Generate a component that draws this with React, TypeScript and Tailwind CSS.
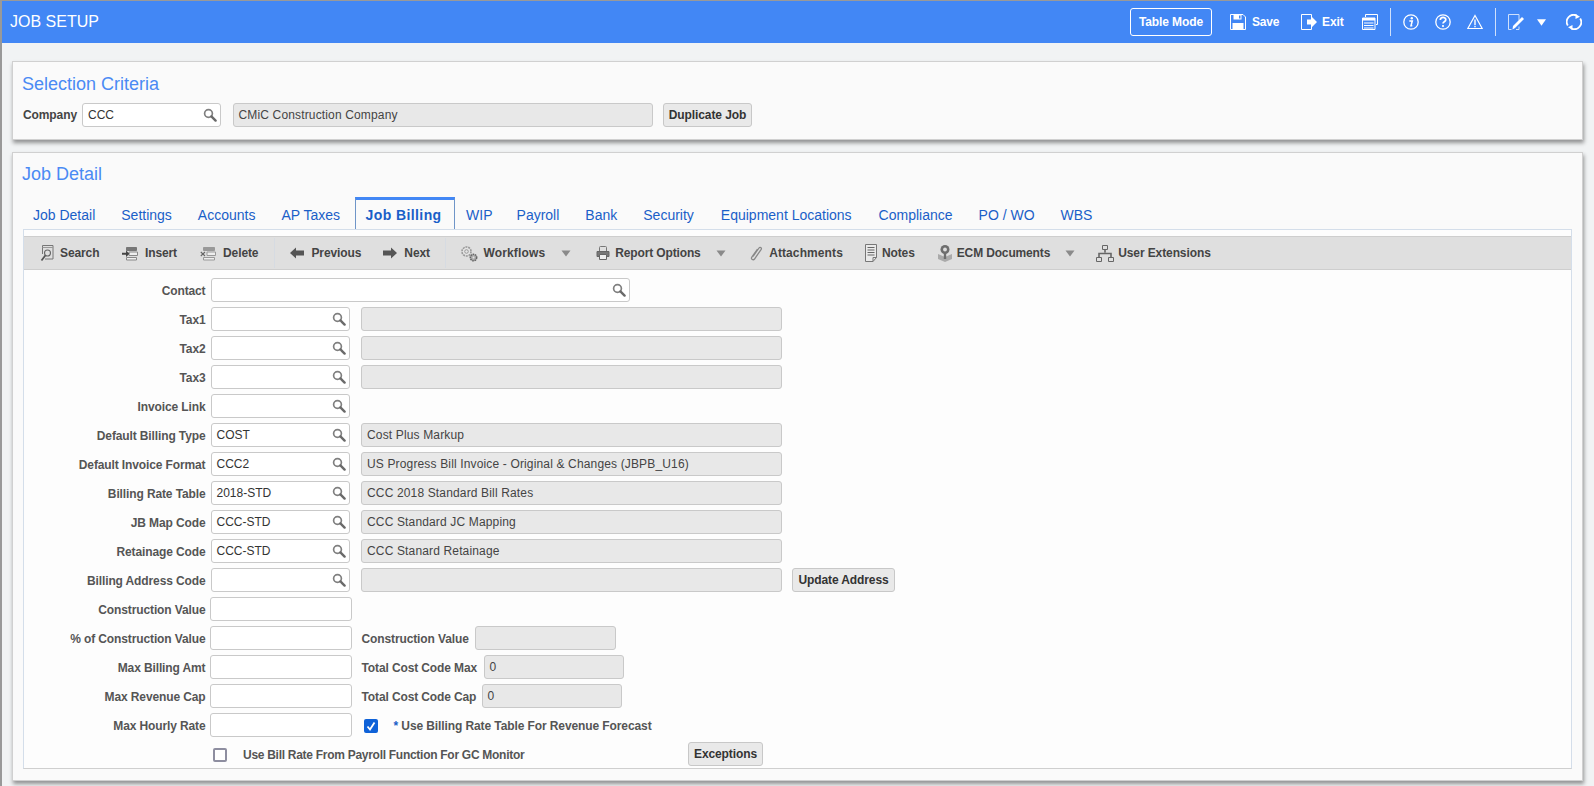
import React from 'react'

const F = "font-['Liberation_Sans',Arial,sans-serif]"

type IconProps = { className?: string }

const Magnifier = () => (
  <svg viewBox="0 0 14 14" className="w-[14px] h-[14px] shrink-0">
    <circle cx="5.5" cy="5.5" r="3.9" fill="none" stroke="#808080" strokeWidth="1.7" />
    <path d="M8.4 8.4 12.6 12.6" stroke="#6a6a6a" strokeWidth="2.4" strokeLinecap="round" />
  </svg>
)

const Caret = ({ className = '' }: IconProps) => (
  <svg viewBox="0 0 10 7" className={`w-[10px] h-[7px] shrink-0 ${className}`}>
    <path d="M0.5 0.5h9L5 6.5z" fill="#8a8a8a" />
  </svg>
)

const SearchIcon = () => (
  <svg viewBox="0 0 14 17" className="w-[14px] h-[17px]">
    <path d="M2.500.5h10.500v13.500H5" fill="none" stroke="#777" />
    <path d="M2.500.5V9" fill="none" stroke="#777" />
    <path d="M2.500 2.500H13" stroke="#999" />
    <circle cx="7.500" cy="8" r="3" fill="none" stroke="#666" strokeWidth="1.100" />
    <path d="M5.300 10.500 1.500 15.500" stroke="#555" strokeWidth="1.800" />
  </svg>
)

const InsertIcon = () => (
  <svg viewBox="0 0 16 15" className="w-[16px] h-[15px]">
    <path d="M4.500 1.500h10v3h-10z" fill="#777" stroke="#777" />
    <path d="M7 6h8.500v3.500H7z" fill="#eee" stroke="#888" />
    <path d="M4.500 11.500h10v2.500h-10z" fill="#eee" stroke="#888" />
    <path d="M0 6.800h4V4.500L7.500 7.800 4 11V8.800H0z" fill="#444" />
  </svg>
)

const DeleteIcon = () => (
  <svg viewBox="0 0 16 15" className="w-[16px] h-[15px]">
    <path d="M3.500 1.500h11v3h-11z" fill="#999" stroke="#999" />
    <path d="M7 6h8.500v3.500H7z" fill="#eee" stroke="#999" />
    <path d="M3.500 11.500h11v2.500h-11z" fill="#eee" stroke="#999" />
    <path d="M.8 6 5 10M5 6 .8 10" stroke="#666" strokeWidth="1.100" />
  </svg>
)

const ArrowLeft = () => (
  <svg viewBox="0 0 14 12" className="w-[14px] h-[12px]">
    <path d="M0 6 6 .5V3.500h8v5H6v3z" fill="#555" />
  </svg>
)

const ArrowRight = () => (
  <svg viewBox="0 0 14 12" className="w-[14px] h-[12px]">
    <path d="M14 6 8 .5V3.500H0v5h8v3z" fill="#555" />
  </svg>
)

const Gears = () => (
  <svg viewBox="0 0 18 17" className="w-[18px] h-[17px]">
    <circle cx="6.500" cy="6.500" r="4.500" fill="#e4e4e4" stroke="#999" strokeWidth="1.600" strokeDasharray="2 .8" />
    <circle cx="6.500" cy="6.500" r="1.800" fill="none" stroke="#999" />
    <circle cx="13.500" cy="12.500" r="3.200" fill="#aaa" stroke="#666" strokeWidth="1.500" strokeDasharray="1.600 .7" />
    <circle cx="13.500" cy="12.500" r="1" fill="#e4e4e4" />
  </svg>
)

const Printer = () => (
  <svg viewBox="0 0 14 14" className="w-[14px] h-[14px]">
    <path d="M3.500 5.500V1.500q0-1 1-1h5q1 0 1 1v4" fill="none" stroke="#777" />
    <path d="M1 5.500h12v5H1z" fill="#777" stroke="#666" />
    <path d="M3.500 8.500h7v5h-7z" fill="#eee" stroke="#666" />
  </svg>
)

const Clip = () => (
  <svg viewBox="0 0 13 17" className="w-[13px] h-[17px]">
    <path d="M3 11.500 9 3c1-1.400 3-.2 2.200 1.300L4.500 14c-1.200 1.600-3.800.4-2.800-1.700L7.500 4" fill="none" stroke="#888" strokeWidth="1.300" />
  </svg>
)

const Notes = () => (
  <svg viewBox="0 0 12 18" className="w-[12px] h-[18px]">
    <path d="M.5.500h11v13l-3.500 4H.5z" fill="#eaeaea" stroke="#777" />
    <path d="M8 17.500v-4h3.500" fill="none" stroke="#777" />
    <path d="M2.500 3.500h7M2.500 6h7M2.500 8.500h7M2.500 11h7" stroke="#666" />
  </svg>
)

const Ecm = () => (
  <svg viewBox="0 0 16 18" className="w-[16px] h-[18px]">
    <path d="M1 10 8 13l7-3v5l-7 3-7-3z" fill="#aaa" />
    <circle cx="8" cy="5.500" r="4.500" fill="#6e6e6e" />
    <circle cx="8" cy="5.500" r="1.900" fill="#ddd" />
    <path d="M6.800 9h2.400v6H6.800z" fill="#6e6e6e" />
  </svg>
)

const Org = () => (
  <svg viewBox="0 0 18 17" className="w-[18px] h-[17px]" fill="none" stroke="#666">
    <path d="M6.500.5h5v4h-5zM.5 12.500h5v4h-5zM12.500 12.500h5v4h-5z" />
    <path d="M9 4.500v3M3 12.500V8.500h12v4" strokeWidth="1.600" />
  </svg>
)

const Lookup = ({ value = '', wide = false }: { value?: string; wide?: boolean }) => (
  <div className={`flex items-center justify-between h-[24px] bg-white border border-[#c9c9c9] rounded-[3px] pl-[5px] pr-[3px] text-[12px] text-[#333] ${wide ? 'w-[419px]' : 'w-[139.500px]'}`}>
    <span>{value}</span>
    <Magnifier />
  </div>
)

const ReadOnly = ({ value = '', className = '' }: { value?: string; className?: string }) => (
  <div className={`flex items-center h-[24px] bg-[#e8e8e8] border border-[#c9c9c9] rounded-[3px] px-[5px] text-[12px] tracking-[0.15px] text-[#444] ${className}`}>{value}</div>
)

const TextBox = () => <div className="w-[142px] -ml-px h-[24px] bg-white border border-[#c9c9c9] rounded-[3px]" />

const Btn = ({ children, className = '' }: { children: React.ReactNode; className?: string }) => (
  <div className={`flex items-center justify-center h-[24px] bg-[#e9e9e9] border border-[#c8c8c8] rounded-[3px] text-[12px] font-bold tracking-[-0.1px] text-[#333] ${className}`}>{children}</div>
)

const Row = ({ label, children }: { label: string; children: React.ReactNode }) => (
  <div className="flex items-center h-[24px] mb-[5px]">
    <div className="w-[181.500px] mr-[5px] pt-[2px] text-right text-[12px] font-bold tracking-[-0.12px] text-[#555] whitespace-nowrap">{label}</div>
    {children}
  </div>
)

const tabs = ['Job Detail', 'Settings', 'Accounts', 'AP Taxes', 'Job Billing', 'WIP', 'Payroll', 'Bank', 'Security', 'Equipment Locations', 'Compliance', 'PO / WO', 'WBS']

const tabPad: Record<string, string> = {
  WIP: 'pl-[13px] pr-[11px]',
  Security: 'pl-[13px] pr-[14px]',
  'Equipment Locations': 'pl-[13px] pr-[14px]',
}

const Tool = ({ icon, label, className = '', track = 'tracking-[-0.1px]' }: { icon: React.ReactNode; label: string; className?: string; track?: string }) => (
  <div className={`flex items-center text-[12px] font-bold text-[#444] whitespace-nowrap ${track} ${className}`}>
    {icon}
    <span>{label}</span>
  </div>
)

const billing: [string, string, string][] = [
  ['Default Billing Type', 'COST', 'Cost Plus Markup'],
  ['Default Invoice Format', 'CCC2', 'US Progress Bill Invoice - Original & Changes (JBPB_U16)'],
  ['Billing Rate Table', '2018-STD', 'CCC 2018 Standard Bill Rates'],
  ['JB Map Code', 'CCC-STD', 'CCC Standard JC Mapping'],
  ['Retainage Code', 'CCC-STD', 'CCC Stanard Retainage'],
]

export default function App() {
  return (
    <div className={`${F} w-full h-screen overflow-hidden bg-[#f1f3f4] border-t border-l-2 border-[#999]`}>
      {/* top bar */}
      <div className="flex items-center h-[42px] bg-[#4287f5] text-white">
        <div className="ml-[8px] text-[16px]">JOB SETUP</div>
        <div className="flex items-center ml-auto">
          <div className="flex items-center justify-center w-[82px] h-[28px] border border-white rounded-[3px] text-[12px] font-bold tracking-[-0.1px]">Table Mode</div>
          <svg viewBox="0 0 16 16" className="w-[16px] h-[16px] ml-[18px]">
            <path d="M.5.500h12.500l2.500 2.500v12.500H.5z" fill="none" stroke="#fff" />
            <path d="M3.500 1h8v4.500h-8zM2.500 9h11v6h-11z" fill="#fff" />
            <path d="M9 1.500h1.500v3H9z" fill="#4287f5" />
          </svg>
          <span className="ml-[6px] w-[27px] text-[12px] font-bold tracking-[-0.2px]">Save</span>
          <svg viewBox="0 0 16 16" className="w-[16px] h-[16px] ml-[22px]">
            <path d="M10.500 3.500V.5H.5v15h10v-3" fill="none" stroke="#fff" />
            <path d="M6 5.500h4V2l6 6-6 6v-3.500H6z" fill="#fff" />
          </svg>
          <span className="ml-[5px] w-[21px] text-[12px] font-bold tracking-[-0.1px]">Exit</span>
          <svg viewBox="0 0 16 16" className="w-[16px] h-[16px] ml-[19px]">
            <path d="M3.500 3V.5h12v10H14" fill="none" stroke="#fff" />
            <path d="M.5 4h12.500v11.500H.5z" fill="#4287f5" stroke="#fff" />
            <path d="M.5 4h12.500v2.500H.5zM2 8.500h9.500v1H2zM2 11h9.500v1H2zM2 13.500h9.500v1H2z" fill="#fff" />
          </svg>
          <div className="w-px h-[28px] bg-[#cfe0fb] ml-[12px]" />
          <svg viewBox="0 0 16 16" className="w-[16px] h-[16px] ml-[12px]">
            <circle cx="8" cy="8" r="7.200" fill="none" stroke="#fff" strokeWidth="1.300" />
            <circle cx="8.800" cy="4.300" r="1.200" fill="#fff" />
            <path d="M6.300 7h3l-1.300 4.800h1.300" fill="none" stroke="#fff" strokeWidth="1.500" />
          </svg>
          <svg viewBox="0 0 16 16" className="w-[16px] h-[16px] ml-[16px]">
            <circle cx="8" cy="8" r="7.200" fill="none" stroke="#fff" strokeWidth="1.300" />
            <path d="M5.300 6c0-3.400 5.500-3.400 5.500-.2 0 2-2.800 2-2.800 3.700" fill="none" stroke="#fff" strokeWidth="1.700" />
            <circle cx="8" cy="12" r="1.100" fill="#fff" />
          </svg>
          <svg viewBox="0 0 16 16" className="w-[16px] h-[16px] ml-[16px]">
            <path d="M8 1.500 15.200 14.500H.8z" fill="none" stroke="#fff" strokeWidth="1.200" />
            <path d="M7.300 5.500h1.400v5.500H7.300zM7.300 11.800h1.400v1.400H7.300z" fill="#fff" />
          </svg>
          <div className="w-px h-[28px] bg-[#cfe0fb] ml-[12px]" />
          <svg viewBox="0 0 16 16" className="w-[16px] h-[16px] ml-[12px]">
            <path d="M5 .5H.5v15h3M5 .5h6v6M8 15.500h3v-3" fill="none" stroke="#cfe0fb" />
            <path d="M4.500 15.500 5 12 14 3l2 2-9 9z" fill="#fff" />
          </svg>
          <svg viewBox="0 0 10 7" className="w-[9px] h-[7px] ml-[13px]">
            <path d="M0 0h10L5 7z" fill="#fff" />
          </svg>
          <svg viewBox="0 0 16 16" className="w-[16px] h-[16px] ml-[20px] mr-[12px]">
            <path d="M1.800 11.500A7 7 0 0 1 10.500 1.400M14.200 4.500A7 7 0 0 1 5.500 14.600" fill="none" stroke="#fff" strokeWidth="1.800" />
            <path d="M9.500 0 14 2.800 9.500 5zM6.500 16 2 13.200 6.500 11z" fill="#fff" />
          </svg>
        </div>
      </div>

      {/* selection criteria */}
      <div className="ml-[10px] mr-[11px] mt-[18px] h-[79px] bg-[#fafafa] border border-[#d0d0d0] shadow-[1px_3px_4px_rgba(0,0,0,0.4)] pl-[10px]">
        <div className="text-[18px] text-[#4a8af4] leading-[20px] mt-[12px] -ml-px">Selection Criteria</div>
        <div className="flex items-center mt-[9px]">
          <span className="text-[12px] font-bold tracking-[-0.1px] text-[#444] w-[59px]">Company</span>
          <div className="w-[138.500px] flex"><Lookup value="CCC" /></div>
          <ReadOnly value="CMiC Construction Company" className="w-[420.500px] ml-[12px]" />
          <Btn className="w-[89px] ml-[10px]">Duplicate Job</Btn>
        </div>
      </div>

      {/* job detail */}
      <div className="ml-[10px] mr-[11px] mt-[12px] h-[629px] bg-[#fafafa] border border-[#d0d0d0] shadow-[1px_3px_4px_rgba(0,0,0,0.4)] px-[10px]">
        <div className="text-[18px] text-[#4a8af4] leading-[20px] mt-[11px] -ml-px">Job Detail</div>
        <div className="flex h-[32px] mt-[13px] -ml-[3px] text-[14px] text-[#1a5fc8]">
          {tabs.map(t =>
            t === 'Job Billing' ? (
              <div key={t} className="flex items-center justify-center w-[100px] ml-[2px] -mr-[2px] border-t-[3px] border-t-[#4287f5] border-x border-x-[#6f95c8] font-bold tracking-[0.4px] bg-[#fafafa] pt-[2px] pr-[3px]">{t}</div>
            ) : (
              <div key={t} className={`flex items-center whitespace-nowrap pt-[5px] ${tabPad[t] ?? 'px-[13px]'}`}>{t}</div>
            ),
          )}
        </div>
        <div className="h-[540px] bg-[#fdfdfd] border border-[#d4deea] border-b-[#cfcfcf] pt-[6px]">
          {/* toolbar */}
          <div className="flex items-center h-[34px] bg-[#dfdfdf] border-y border-[#cecece]">
            <Tool className="ml-[16px]" icon={<span className="mr-[6px]"><SearchIcon /></span>} label="Search" />
            <Tool className="ml-[23px]" icon={<span className="mr-[6.500px]"><InsertIcon /></span>} label="Insert" />
            <Tool className="ml-[23px]" icon={<span className="mr-[7px]"><DeleteIcon /></span>} label="Delete" />
            <div className="w-px h-[30px] bg-[#d6dbe2] ml-[16px]" />
            <Tool className="ml-[15px]" icon={<span className="mr-[7px]"><ArrowLeft /></span>} label="Previous" />
            <Tool className="ml-[22px]" icon={<span className="mr-[7px]"><ArrowRight /></span>} label="Next" />
            <div className="w-px h-[30px] bg-[#d6dbe2] ml-[15px]" />
            <Tool className="ml-[14px]" track="tracking-[0.15px]" icon={<span className="mr-[5.500px]"><Gears /></span>} label="Workflows" />
            <Caret className="ml-[16px]" />
            <Tool className="ml-[25px]" track="tracking-[-0.14px]" icon={<span className="mr-[5px]"><Printer /></span>} label="Report Options" />
            <Caret className="ml-[15.500px]" />
            <Tool className="ml-[24px]" track="tracking-[0.1px]" icon={<span className="mr-[6px]"><Clip /></span>} label="Attachments" />
            <Tool className="ml-[22px]" icon={<span className="mr-[5px]"><Notes /></span>} label="Notes" />
            <Tool className="ml-[22px]" track="tracking-[-0.15px]" icon={<span className="mr-[4px]"><Ecm /></span>} label="ECM Documents" />
            <Caret className="ml-[15px]" />
            <Tool className="ml-[21px]" icon={<span className="mr-[4px]"><Org /></span>} label="User Extensions" />
          </div>

          {/* form */}
          <div className="pt-[8px]">
            <Row label="Contact"><Lookup wide /></Row>
            {['Tax1', 'Tax2', 'Tax3'].map(label => (
              <Row key={label} label={label}>
                <Lookup />
                <ReadOnly className="w-[421px] ml-[11px]" />
              </Row>
            ))}
            <Row label="Invoice Link"><Lookup /></Row>
            {billing.map(([label, code, desc]) => (
              <Row key={label} label={label}>
                <Lookup value={code} />
                <ReadOnly value={desc} className="w-[421px] ml-[11px]" />
              </Row>
            ))}
            <Row label="Billing Address Code">
              <Lookup />
              <ReadOnly className="w-[421px] ml-[11px]" />
              <Btn className="w-[103px] ml-[10px]">Update Address</Btn>
            </Row>
            <Row label="Construction Value"><TextBox /></Row>
            <Row label="% of Construction Value">
              <TextBox />
              <span className="ml-[10px] pt-[2px] w-[113px] text-[12px] font-bold tracking-[-0.12px] text-[#555]">Construction Value</span>
              <ReadOnly className="w-[141px]" />
            </Row>
            <Row label="Max Billing Amt">
              <TextBox />
              <span className="ml-[10px] pt-[2px] w-[122px] text-[12px] font-bold tracking-[-0.12px] text-[#555]">Total Cost Code Max</span>
              <ReadOnly value="0" className="w-[140px]" />
            </Row>
            <Row label="Max Revenue Cap">
              <TextBox />
              <span className="ml-[10px] pt-[2px] w-[120px] text-[12px] font-bold tracking-[-0.12px] text-[#555]">Total Cost Code Cap</span>
              <ReadOnly value="0" className="w-[140px]" />
            </Row>
            <Row label="Max Hourly Rate">
              <TextBox />
              <div className="flex items-center justify-center w-[14px] h-[14px] ml-[12px] mt-[2px] rounded-[2px] bg-[#0f62d8]">
                <svg viewBox="0 0 12 12" className="w-[12px] h-[12px]">
                  <path d="M2.500 6.500 5 9.500 9.500 2.500" fill="none" stroke="#fff" strokeWidth="1.800" />
                </svg>
              </div>
              <span className="ml-[16px] pt-[2px] text-[12px] font-bold tracking-[-0.1px] text-[#555]"><span className="text-[#1a5fc8]">*</span> Use Billing Rate Table For Revenue Forecast</span>
            </Row>
            <div className="flex items-center h-[24px]">
              <div className="w-[14px] h-[14px] ml-[189px] mt-[2px] border-2 border-[#8e8ea0] rounded-[2px] bg-white" />
              <span className="ml-[16px] pt-[2px] w-[445px] text-[12px] font-bold tracking-[-0.28px] text-[#555]">Use Bill Rate From Payroll Function For GC Monitor</span>
              <Btn className="w-[75px]">Exceptions</Btn>
            </div>
          </div>
        </div>
      </div>
    </div>
  )
}
